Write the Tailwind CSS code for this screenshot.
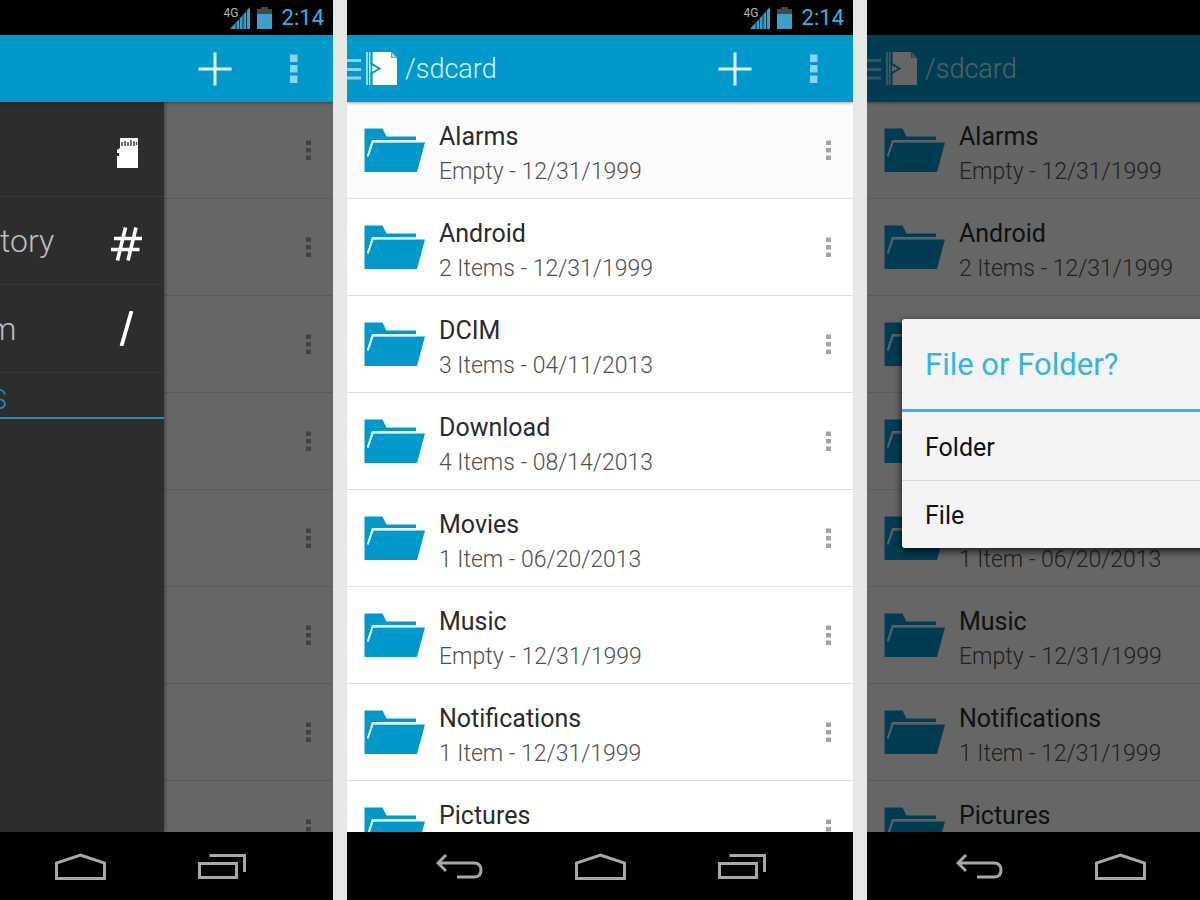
<!DOCTYPE html>
<html lang="en">
<head>
    <meta charset="UTF-8">
    <meta name="viewport" content="width=device-width, initial-scale=1.0">
    <title>File manager</title>
    <script src="https://cdn.jsdelivr.net/npm/@tailwindcss/browser@4"></script>
</head>
<body class="h-screen overflow-hidden bg-[#e5e8e5] font-['Roboto',sans-serif]">
    <!-- shared icons -->
    <svg class="hidden">
        <symbol id="signal" viewBox="0 0 20 22">
            <path fill="#3a9fc9" d="M0 22 20 0V22Z"/>
            <path stroke="#0b2a38" stroke-width="1" d="M6 14V22M9.500 10V22M13 7V22M16.500 3V22"/>
        </symbol>
        <symbol id="battery" viewBox="0 0 15 22">
            <path fill="#474747" d="M4 0H11V2H15V8H0V2H4Z"/>
            <path fill="#3a9fc9" d="M0 7H15V22H0Z"/>
        </symbol>
        <symbol id="plus" viewBox="0 0 34 34">
            <path fill="none" stroke="#e6f5fb" stroke-width="3" d="M17 0.500V33.500M0.500 17H33.500"/>
        </symbol>
        <symbol id="overflow" viewBox="0 0 8 30">
            <path fill="#8fd0ec" d="M0 0.500H7.500V8H0ZM0 11H7.500V18.500H0ZM0 21.500H7.500V29H0Z"/>
        </symbol>
        <symbol id="dots" viewBox="0 0 5 20">
            <path fill="#a3a3a3" d="M0 0.500H5V5H0ZM0 8H5V12.500H0ZM0 15.500H5V20H0Z"/>
        </symbol>
        <symbol id="hamburger" viewBox="0 0 14 22">
            <path stroke="#8fd0ec" stroke-width="3" d="M0 2.500H14M0 11.500H14M0 20H14"/>
        </symbol>
        <symbol id="logo" viewBox="0 0 31 33">
            <path fill="#fff" d="M6.500 0H25V6H31V33H6.500V22L14.500 16.500 6.500 11Z"/>
            <path fill="#a5daf0" d="M25.500 0 31 5.500H25.500Z"/>
            <path stroke="#c5e7f5" stroke-width="1.500" d="M1 0V33M3.700 0V33"/>
            <path fill="#fff" d="M4.500 12.500 12 16.500 4.500 21Z"/>
            <path fill="none" stroke="#0099cc" stroke-width="1.400" d="M5.500 0V33M4.500 11.500 14 16.500 4.500 21.500"/>
        </symbol>
        <symbol id="folder" viewBox="0 0 61 44">
            <path fill="#0099cc" d="M0.500 0.500H18.500L22.500 8.500H52V12H8L3 28 4.500 28.500 9.500 14.500H61L53 44H0.500Z"/>
            <path fill="none" stroke="#d9f0f9" stroke-width="1.700" d="M3.800 28.500 8.700 13.500H52.500"/>
        </symbol>
        <symbol id="back" viewBox="0 0 47 25">
            <path fill="none" stroke="#a8a8a8" stroke-width="3" d="M10 1 2 9 10 17M2 9H38C43 9 45 12 45 16 45 20 43 23 38 23H21"/>
        </symbol>
        <symbol id="home" viewBox="0 0 51 27">
            <path fill="none" stroke="#a8a8a8" stroke-width="3" d="M1.500 25.500V10L25.500 2 49.500 10V25.500Z"/>
        </symbol>
        <symbol id="recents" viewBox="0 0 49 25">
            <path fill="none" stroke="#a8a8a8" stroke-width="3" d="M1.500 9.500H38.500V23.500H1.500ZM11.500 1.500H46.500V18"/>
        </symbol>
    </svg>

    <main class="grid h-full grid-cols-[minmax(0,1fr)_506px_minmax(0,1fr)] gap-[14px]">
        <!-- drawer open -->
        <section class="flex justify-end overflow-hidden">
            <div class="flex w-[506px] shrink-0 flex-col">
                <div data-part="status"></div>
                <div data-part="appbar"></div>
                <div class="relative min-h-0 flex-1 overflow-hidden bg-white">
                    <ul data-part="covered"></ul>
                    <div class="absolute inset-0 bg-black/60"></div>
                    <aside class="absolute inset-y-0 left-0 w-[337px] bg-[#2d2d2d] pt-[7px] text-[32px] font-light text-[#bdbdbd] shadow-[0_0_5px_rgba(0,0,0,0.5)]">
                        <button class="flex h-[88px] w-full items-center justify-between border-b border-[#363636] pr-[26px] pl-[27px]">
                            <span>SD Card</span>
                            <svg class="h-[30px] w-[21px]" viewBox="0 0 21 30">
                                <path fill="#fff" d="M3 0H21V30H0V18H2V15H0V12L3 10Z"/>
                                <path stroke="#444" stroke-width="1.500" d="M5 4V8M8 3V8M11 4V8M14 2V8M17 3V8M19.500 4V7"/>
                            </svg>
                        </button>
                        <button class="flex h-[88px] w-full items-center justify-between border-b border-[#363636] pr-[22px] pl-[27px]">
                            <span>Root Directory</span>
                            <svg class="mt-[7px] h-[34px] w-[31px]" viewBox="0 0 31 34">
                                <path fill="none" stroke="#fff" stroke-width="3.600" d="M14.500 0.500 6.500 33.500M25 0.500 17 33.500M3 11.500H31M0 22.500H28.500"/>
                            </svg>
                        </button>
                        <button class="flex h-[88px] w-full items-center justify-between border-b border-[#363636] pr-[30px] pl-[27px]">
                            <span>File System</span>
                            <svg class="h-[35px] w-[15px]" viewBox="0 0 15 35">
                                <path stroke="#fff" stroke-width="3.800" d="M12.500 0 2.500 35"/>
                            </svg>
                        </button>
                        <h2 class="h-[46px] border-b-2 border-[#1f8fb5] pl-[13px] text-[28px] leading-[54px] text-[#1f8fb5]">BOOKMARKS</h2>
                    </aside>
                </div>
                <div data-part="nav"></div>
            </div>
        </section>

        <!-- file list -->
        <section class="flex flex-col overflow-hidden">
            <div data-part="status"></div>
            <div data-part="appbar"></div>
            <div class="min-h-0 flex-1 overflow-hidden bg-white">
                <ul data-part="files"></ul>
            </div>
            <div data-part="nav"></div>
        </section>

        <!-- new file dialog -->
        <section class="overflow-hidden">
            <div class="flex h-full w-[506px] flex-col">
                <div data-part="status"></div>
                <div class="relative flex min-h-0 flex-1 flex-col">
                    <div data-part="appbar"></div>
                    <div class="min-h-0 flex-1 overflow-hidden bg-white">
                        <ul data-part="files"></ul>
                    </div>
                    <div class="absolute inset-0 z-20 flex items-center justify-center bg-black/60">
                        <div role="dialog" aria-labelledby="dialog-title" class="w-[436px] rounded-[3px] bg-[#f4f4f4] shadow-[0_3px_8px_rgba(0,0,0,0.8)]">
                            <h2 id="dialog-title" class="h-[93px] border-b-3 border-[#33b5e5] px-[23px] text-[31px] leading-[92px] text-[#33b5e5]">File or Folder?</h2>
                            <button class="block h-[69px] w-full border-b border-[#d8d8d8] px-[23px] pt-[3px] text-left text-[25px] text-[#111]">Folder</button>
                            <button class="block h-[67px] w-full px-[23px] pt-[3px] text-left text-[25px] text-[#111]">File</button>
                        </div>
                    </div>
                </div>
                <div data-part="nav"></div>
            </div>
        </section>
    </main>
</body>
<script>
    const files = [
        ['Alarms', 'Empty - 12/31/1999'],
        ['Android', '2 Items - 12/31/1999'],
        ['DCIM', '3 Items - 04/11/2013'],
        ['Download', '4 Items - 08/14/2013'],
        ['Movies', '1 Item - 06/20/2013'],
        ['Music', 'Empty - 12/31/1999'],
        ['Notifications', '1 Item - 12/31/1999'],
        ['Pictures', 'Empty - 12/31/1999']
    ];

    const parts = {
        status: `
            <div class="flex h-[35px] items-center justify-end bg-black pr-[9px] text-[#33b5e5]">
                <div class="relative mr-[7px]">
                    <svg class="h-[22px] w-[20px]"><use href="#signal"/></svg>
                    <span class="absolute top-0 -left-[6px] text-[12px] leading-[12px] text-[#b5b5b5]">4G</span>
                </div>
                <svg class="mr-[10px] h-[22px] w-[15px]"><use href="#battery"/></svg>
                <span class="text-[22px] leading-[37px]">2:14</span>
            </div>`,
        appbar: `
            <header class="relative z-10 flex h-[67px] items-center bg-[#0099cc] shadow-[0_1px_3px_rgba(0,0,0,0.35)]">
                <button aria-label="Open drawer" class="flex items-center gap-[5px]">
                    <svg class="h-[22px] w-[14px]"><use href="#hamburger"/></svg>
                    <svg class="h-[33px] w-[31px]"><use href="#logo"/></svg>
                </button>
                <h1 class="ml-[8px] flex-1 pt-[2px] text-[27px] font-light text-[#d5eef8]">/sdcard</h1>
                <button aria-label="Add" class="flex h-full w-[79px] items-center justify-center">
                    <svg class="h-[34px] w-[34px]"><use href="#plus"/></svg>
                </button>
                <button aria-label="More options" class="flex h-full w-[79px] items-center justify-center">
                    <svg class="h-[30px] w-[8px]"><use href="#overflow"/></svg>
                </button>
            </header>`,
        files: files.map(([name, info]) => `
            <li class="flex h-[97px] items-center border-b border-[#e0e0e0] pl-[17px] first:bg-[#fcfcfc]">
                <svg class="h-[44px] w-[61px]"><use href="#folder"/></svg>
                <div class="ml-[14px] flex-1 pt-[7px]">
                    <p class="text-[25px] leading-[35px] text-[#2b2b2b]">${name}</p>
                    <p class="text-[23px] leading-[35px] font-light text-[#505050]">${info}</p>
                </div>
                <button aria-label="${name} options" class="flex h-full w-[50px] items-center justify-center">
                    <svg class="h-[20px] w-[5px]"><use href="#dots"/></svg>
                </button>
            </li>`).join(''),
        // rows under the drawer only show their menu
        covered: files.map(([name]) => `
            <li class="flex h-[97px] items-center justify-end border-b border-[#e0e0e0]">
                <button aria-label="${name} options" class="flex h-full w-[50px] items-center justify-center">
                    <svg class="h-[20px] w-[5px]"><use href="#dots"/></svg>
                </button>
            </li>`).join(''),
        nav: `
            <nav class="flex h-[68px] items-center justify-center gap-[92px] bg-black pl-[2px]">
                <button aria-label="Back"><svg class="h-[25px] w-[47px]"><use href="#back"/></svg></button>
                <button aria-label="Home"><svg class="h-[27px] w-[51px]"><use href="#home"/></svg></button>
                <button aria-label="Recent apps"><svg class="h-[25px] w-[49px]"><use href="#recents"/></svg></button>
            </nav>`
    };

    document.querySelectorAll('[data-part]').forEach(function(el) {
        el.innerHTML = parts[el.dataset.part];
    });
</script>
</html>
